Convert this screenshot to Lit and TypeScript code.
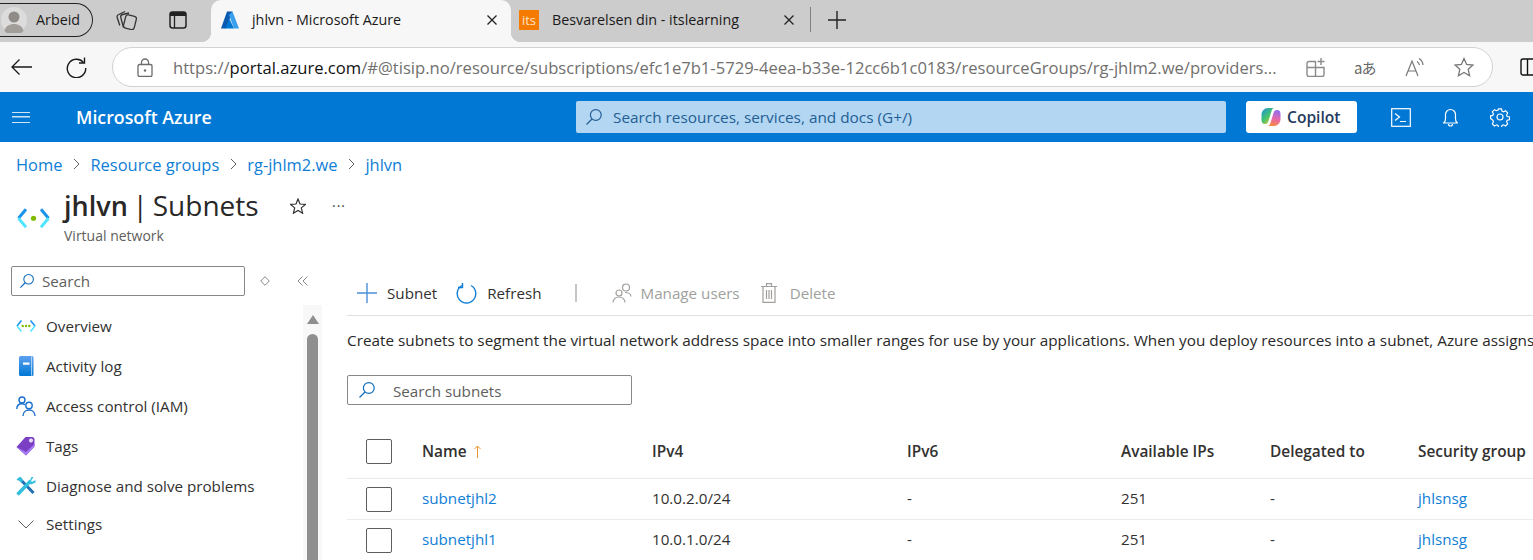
import { LitElement, css, html, svg } from 'lit';
import { customElement } from 'lit/decorators.js';

const icon = (w: number, h: number, body: unknown, vb = `0 0 ${w} ${h}`) =>
  html`<svg width=${w} height=${h} viewBox=${vb} fill="none">${body}</svg>`;

const magnifier = (color: string, size = 18) =>
  icon(size, size, svg`<circle cx="10.8" cy="7" r="5.4" stroke=${color} stroke-width="1.2"/><path d="M7 11 1.5 16.5" stroke=${color} stroke-width="1.3"/>`, '0 0 18 18');

const closeIcon = () => icon(10, 10, svg`<path d="M.5.5l9 9m0-9-9 9" stroke="#222" stroke-width="1.3"/>`);

const vnetIcon = (size: number) =>
  icon(size, size * 0.62, svg`
    <path d="M9 1 1.5 10" stroke="#1b93eb" stroke-width="3"/>
    <path d="M1.5 10 9 19" stroke="#50e6ff" stroke-width="3"/>
    <path d="M24 1 31.5 10" stroke="#1b93eb" stroke-width="3"/>
    <path d="M31.5 10 24 19" stroke="#50e6ff" stroke-width="3"/>
    <circle cx="16.5" cy="10" r="2.6" fill="#7fba00"/>`, '0 0 33 20');

const navItems = [
  {
    label: 'Overview',
    glyph: html`<svg width="20" height="12" viewBox="0 0 33 20" fill="none">
      <path d="M9 1 1.5 10" stroke="#1b93eb" stroke-width="2.6"/><path d="M1.5 10 9 19" stroke="#50e6ff" stroke-width="2.6"/>
      <path d="M24 1 31.5 10" stroke="#1b93eb" stroke-width="2.6"/><path d="M31.5 10 24 19" stroke="#50e6ff" stroke-width="2.6"/>
      <circle cx="11" cy="10" r="2" fill="#7fba00"/><circle cx="16.5" cy="10" r="2" fill="#7fba00"/><circle cx="22" cy="10" r="2" fill="#7fba00"/></svg>`,
  },
  {
    label: 'Activity log',
    glyph: icon(16, 20, svg`
      <defs><linearGradient id="book" x1="0" y1="0" x2="0" y2="1"><stop offset="0" stop-color="#5ea0ef"/><stop offset="1" stop-color="#0078d4"/></linearGradient></defs>
      <path d="M2.5 0H14a1.5 1.5 0 0 1 1.5 1.5v17A1.5 1.5 0 0 1 14 20H2.5A1.5 1.5 0 0 1 1 18.5v-17A1.5 1.5 0 0 1 2.5 0Z" fill="url(#book)"/>
      <path d="M13.6.3v19.4" stroke="#d4e6f7" stroke-width=".8"/>
      <rect x="5" y="6.5" width="6.5" height="2.2" fill="#fff"/>`),
  },
  {
    label: 'Access control (IAM)',
    glyph: icon(20, 20, svg`
      <g stroke="#1a70cf" stroke-width="1.4">
        <circle cx="6" cy="4" r="3"/><path d="M.8 13c0-3 2-5.2 5.2-5.2 1.2 0 2.2.3 3 .9"/>
        <circle cx="13" cy="9.5" r="3.2"/><path d="M7 20c0-3.5 2.5-6 6-6s6 2.5 6 6"/>
      </g>`),
  },
  {
    label: 'Tags',
    glyph: icon(20, 20, svg`
      <path d="M9.5 1H16a2.5 2.5 0 0 1 2.5 2.5v7L10 19.5.5 11Z" fill="#7b3fc4"/>
      <path d="M.5 11 10 19.5l8.5-9V8L10 16Z" fill="#a67af4"/>
      <circle cx="15" cy="4.5" r="1.7" fill="#e5d5f7" stroke="#fff" stroke-width=".6"/>`),
  },
  {
    label: 'Diagnose and solve problems',
    glyph: icon(20, 20, svg`
      <path d="M3 2 17.5 17" stroke="#1f6fb5" stroke-width="3"/>
      <path d="M1.5 18.5 14.5 5" stroke="#32bedd" stroke-width="3.4"/>
      <path d="M13 6.5 15.5 1h2L15 5l1 1 3.5-2v2.5L15 8.5Z" fill="#32bedd"/>
      <path d="M5.5 1.5a4 4 0 0 0-5 2.5l3 .7.8 1.8 2.8-1.5Z" fill="#32bedd"/>`),
  },
];

const columns = ['Name', 'IPv4', 'IPv6', 'Available IPs', 'Delegated to', 'Security group'];
const subnets = [
  { name: 'subnetjhl2', ipv4: '10.0.2.0/24', ipv6: '-', free: '251', delegated: '-', nsg: 'jhlsnsg' },
  { name: 'subnetjhl1', ipv4: '10.0.1.0/24', ipv6: '-', free: '251', delegated: '-', nsg: 'jhlsnsg' },
];

@customElement('app-root')
export class AppRoot extends LitElement {
  static styles = css`
    :host {
      display: block;
      width: 1533px;
      height: 560px;
      overflow: hidden;
      background: #fff;
      color: #323130;
      font-family: 'Open Sans', 'Noto Sans', sans-serif;
      font-size: 15.2px;
    }

    svg {
      display: block;
      flex: none;
    }

    /* browser chrome */
    .strip {
      display: flex;
      align-items: center;
      height: 42px;
      background: #ccc;
      color: #1a1a1a;
      font-size: 14.3px;
    }

    .profile {
      display: flex;
      align-items: center;
      box-sizing: border-box;
      width: 93px;
      height: 34px;
      margin-top: -3px;
      border: 1.5px solid #222;
      border-left: 0;
      border-radius: 0 17px 17px 0;
    }

    .avatar {
      width: 26px;
      height: 26px;
      margin: 0 9px 0 1px;
      flex: none;
    }

    .strip-btn {
      display: flex;
      margin-left: 23px;
      margin-top: -3px;
    }

    .strip-btn.second {
      margin-left: 32px;
    }

    .tab {
      position: relative;
      display: flex;
      align-items: center;
      box-sizing: border-box;
      width: 300px;
      height: 42px;
      margin-left: 24px;
      padding: 0 14px 3px 10px;
    }

    .tab.active {
      background: #f7f7f7;
      border-radius: 10px 10px 0 0;
    }

    .tab.active::before,
    .tab.active::after {
      content: '';
      position: absolute;
      bottom: 0;
      width: 10px;
      height: 10px;
    }

    .tab.active::before {
      left: -10px;
      background: radial-gradient(circle at 0 0, #ccc 10px, #f7f7f7 10.5px);
    }

    .tab.active::after {
      right: -10px;
      background: radial-gradient(circle at 100% 0, #ccc 10px, #f7f7f7 10.5px);
    }

    .tab.other {
      width: 299px;
      margin-left: 0;
      padding-left: 8px;
      padding-right: 16px;
    }

    .tab-title {
      flex: 1;
      margin-left: 13px;
      white-space: nowrap;
    }

    .its {
      display: flex;
      align-items: center;
      justify-content: center;
      width: 20px;
      height: 20px;
      background: #f47b00;
      color: #ffe3c7;
      font-size: 13px;
    }

    .tab-sep {
      width: 1px;
      height: 25px;
      margin: -3px 17px 0 0;
      background: #808080;
    }

    .new-tab {
      margin-top: -3px;
    }

    .toolbar {
      display: flex;
      align-items: center;
      height: 50px;
      background: #f7f7f7;
    }

    .nav-btn {
      display: flex;
      justify-content: center;
      width: 28px;
    }

    .nav-btn.back {
      margin-left: 7px;
    }

    .nav-btn.reload {
      margin-left: 27px;
    }

    .address {
      display: flex;
      align-items: center;
      box-sizing: border-box;
      width: 1381px;
      height: 40px;
      margin-left: 22px;
      padding: 0 18px 0 24px;
      background: #fff;
      border: 1.5px solid #d2d2d2;
      border-radius: 20px;
    }

    .url {
      flex: 1;
      margin-left: 20px;
      color: #71706e;
      font-size: 16.6px;
      white-space: nowrap;
    }

    .url b {
      color: #111;
      font-weight: 400;
    }

    .addr-icons {
      display: flex;
      align-items: center;
      gap: 29px;
    }

    .translate {
      width: 22px;
      color: #666;
      font-family: 'Noto Sans CJK JP', sans-serif;
      font-size: 15px;
      white-space: nowrap;
      letter-spacing: -1px;
    }

    .sidebar-btn {
      margin-left: 27px;
    }

    /* portal header */
    .portal {
      display: flex;
      align-items: center;
      height: 50px;
      background: #0078d4;
      color: #fff;
    }

    .burger {
      width: 18px;
      height: 11px;
      margin-left: 12px;
      border-top: 1.5px solid #cfe4f5;
      border-bottom: 1.5px solid #cfe4f5;
      background: linear-gradient(#cfe4f5, #cfe4f5) center / 100% 1.5px no-repeat;
      box-sizing: border-box;
    }

    .brand {
      width: 500px;
      margin-left: 46px;
      font-size: 17.8px;
      font-weight: 600;
    }

    .portal-search {
      display: flex;
      align-items: center;
      gap: 10px;
      box-sizing: border-box;
      width: 650px;
      height: 32px;
      padding-left: 9px;
      background: #b3d6f2;
      border-radius: 2px;
      color: #235e94;
      font-size: 15.35px;
    }

    .copilot {
      display: flex;
      align-items: center;
      gap: 6px;
      box-sizing: border-box;
      width: 111px;
      height: 32px;
      margin-left: 20px;
      padding-left: 15px;
      background: #fff;
      border-radius: 3px;
      color: #243a5e;
      font-size: 15.6px;
      font-weight: 600;
    }

    .portal-icons {
      display: flex;
      align-items: center;
      margin-left: 34px;
      gap: 32px;
    }

    /* page heading */
    .crumbs {
      display: flex;
      align-items: center;
      box-sizing: border-box;
      height: 46px;
      padding: 0 0 2px 16px;
      color: #0f7ed6;
      font-size: 16.45px;
    }

    .crumbs svg {
      margin: 0 10.5px;
    }

    .heading {
      display: flex;
      align-items: flex-start;
      height: 78px;
      padding-left: 17px;
    }

    .heading .vnet {
      margin-top: 20px;
    }

    .heading-text {
      margin-left: 14px;
      width: 218px;
    }

    h1 {
      margin: 0;
      color: #292827;
      font-size: 28px;
      font-weight: 400;
      line-height: 35px;
      word-spacing: -2.5px;
      white-space: nowrap;
    }

    h1 b {
      font-size: 27px;
      font-weight: 600;
    }

    .subtitle {
      margin-top: 4px;
      color: #605e5c;
      font-size: 14px;
      line-height: 18px;
    }

    .heading .star {
      margin: 10px 0 0 8px;
    }

    .more {
      margin: 8px 0 0 26px;
      color: #444;
      font-size: 14px;
      letter-spacing: 1px;
    }

    .layout {
      display: flex;
    }

    /* left menu */
    .side {
      display: flex;
      flex: none;
      width: 347px;
    }

    .side-main {
      width: 303px;
      padding-left: 11px;
      box-sizing: border-box;
    }

    .side-search-row {
      display: flex;
      align-items: center;
      height: 30px;
      margin-bottom: 10px;
    }

    .box {
      display: flex;
      flex: none;
      align-items: center;
      box-sizing: border-box;
      background: #fff;
      border: 1px solid #8a8886;
      border-radius: 2px;
      color: #605e5c;
    }

    .side-search {
      gap: 7px;
      width: 234px;
      height: 30px;
      padding-left: 7px;
    }

    .side-tools {
      display: flex;
      flex: none;
      align-items: center;
      margin-left: 15px;
      gap: 27px;
    }

    .nav {
      display: flex;
      flex-direction: column;
    }

    .nav-item {
      display: flex;
      align-items: center;
      height: 40px;
    }

    .nav-item.settings {
      height: 36px;
    }

    .nav-glyph {
      display: flex;
      justify-content: center;
      width: 30px;
      margin-right: 5px;
    }

    .scroll {
      display: flex;
      flex-direction: column;
      align-items: center;
      box-sizing: border-box;
      width: 19px;
      height: 260px;
      margin-top: 39px;
      padding-top: 10px;
      background: #f8f8f8;
    }

    .scroll-up {
      width: 0;
      height: 0;
      border-left: 6.5px solid transparent;
      border-right: 6.5px solid transparent;
      border-bottom: 9px solid #8f8f8f;
    }

    .scroll-thumb {
      flex: 1;
      width: 11px;
      margin-top: 10px;
      background: #8f8f8f;
      border-radius: 6px 6px 0 0;
    }

    /* subnets blade */
    .blade {
      flex: 1;
      min-width: 0;
      padding-top: 11px;
    }

    .commands {
      display: flex;
      align-items: center;
      height: 32px;
      padding-bottom: 6px;
      border-bottom: 1px solid #e1dfdd;
    }

    .cmd {
      display: flex;
      align-items: center;
      gap: 10px;
      white-space: nowrap;
    }

    .cmd.add {
      margin-left: 10px;
    }

    .cmd.refresh {
      margin-left: 19px;
    }

    .cmd.users {
      margin-left: 35px;
      gap: 9px;
    }

    .cmd.del {
      margin-left: 21px;
      gap: 13px;
    }

    .cmd.disabled {
      color: #a19f9d;
    }

    .cmd-sep {
      width: 2px;
      height: 18px;
      margin-left: 33px;
      background: #c8c6c4;
    }

    .desc {
      height: 20px;
      margin: 14px 0 25px;
      color: #292827;
      font-size: 15.3px;
      line-height: 20px;
      white-space: nowrap;
    }

    .blade-search {
      gap: 17px;
      width: 285px;
      height: 30px;
      padding-left: 10px;
    }

    .blade-search span {
      margin-top: 2px;
    }

    .table {
      margin-top: 20px;
    }

    .row {
      display: grid;
      grid-template-columns: 75px 230px 255px 214px 149px 148px 1fr;
      align-items: center;
      height: 41px;
      border-top: 1px solid #edebe9;
      box-sizing: border-box;
      white-space: nowrap;
    }

    .row > :not(.check) {
      margin-bottom: 2px;
    }

    .row.head {
      height: 53px;
      border-top: 0;
      font-size: 15.4px;
      font-weight: 600;
    }

    .row.head > :not(.check) {
      margin-bottom: 0;
    }

    .check {
      box-sizing: border-box;
      width: 26px;
      height: 25px;
      margin-left: 19px;
      background: #fff;
      border: 1px solid #605e5c;
      border-radius: 2px;
    }

    .name-cell {
      display: flex;
      align-items: center;
      gap: 7px;
    }

    a {
      color: #0f7ed6;
      text-decoration: none;
    }
  `;

  private renderStrip() {
    return html`<div class="strip">
      <div class="profile">
        <svg class="avatar" viewBox="0 0 26 26">
          <circle cx="13" cy="13" r="13" fill="#dcdcdc" />
          <circle cx="13" cy="10" r="5.5" fill="#8f8b87" />
          <path d="M3.5 24c1-5 5-7 9.5-7s8.5 2 9.5 7a13 13 0 0 1-19 0Z" fill="#a19d99" />
        </svg>
        Arbeid
      </div>
      <span class="strip-btn">${icon(21, 20, svg`
        <g stroke="#333" stroke-width="1.3">
          <rect x="8.5" y="5.5" width="11" height="13.5" rx="2.5" transform="rotate(14 14 12)" />
          <path d="M7.5 17.5 4.8 7.5a2.5 2.5 0 0 1 1.8-3L13 3" />
          <path d="M3.8 15.5 1.2 7.5a2.5 2.5 0 0 1 1.6-3L9 1.5" />
        </g>`)}</span>
      <span class="strip-btn second">${icon(18, 18, svg`
        <rect x="1" y="1" width="16" height="16" rx="2.5" stroke="#222" stroke-width="1.5" />
        <path d="M1 2.5A1.5 1.5 0 0 1 2.5 1h13A1.5 1.5 0 0 1 17 2.5V5H1Z" fill="#222" />
        <path d="M5.5 5v12" stroke="#222" stroke-width="1.3" />`)}</span>
      <div class="tab active">
        ${icon(18, 18, svg`
          <path d="M6 .5h5.500L5 17.500H0Z" fill="#0a5bb0" />
          <path d="M11.500.5 18 17.500h-5L8 4Z" fill="#3aa0ee" />
          <path d="M8.500 8 13 17.500H4Z" fill="#0078d4" />`)}
        <span class="tab-title">jhlvn - Microsoft Azure</span>
        ${closeIcon()}
      </div>
      <div class="tab other">
        <span class="its">its</span>
        <span class="tab-title">Besvarelsen din - itslearning</span>
        ${closeIcon()}
      </div>
      <span class="tab-sep"></span>
      <span class="new-tab">${icon(18, 18, svg`<path d="M9 0v18M0 9h18" stroke="#222" stroke-width="1.4" />`)}</span>
    </div>`;
  }

  private renderToolbar() {
    return html`<div class="toolbar">
      <span class="nav-btn back">${icon(21, 16, svg`<path d="M8.500.5 1 8l7.500 7.500M1 8h20" stroke="#1a1a1a" stroke-width="1.3" />`)}</span>
      <span class="nav-btn reload">${icon(21, 21, svg`
        <path d="M17.500 5.500A9.200 9.200 0 1 0 19.700 11" stroke="#1a1a1a" stroke-width="1.4" />
        <path d="M18.500.5V6H13" stroke="#1a1a1a" stroke-width="1.4" />`)}</span>
      <div class="address">
        ${icon(16, 19, svg`
          <rect x="1" y="6.5" width="14" height="12" rx="1.5" stroke="#6b6b6b" stroke-width="1.3" />
          <path d="M4.500 6.500v-2a3.500 3.500 0 0 1 7 0v2" stroke="#6b6b6b" stroke-width="1.3" />
          <circle cx="8" cy="12.5" r="1.2" fill="#6b6b6b" />`)}
        <span class="url">https://<b>portal.azure.com</b>/#@tisip.no/resource/subscriptions/efc1e7b1-5729-4eea-b33e-12cc6b1c0183/resourceGroups/rg-jhlm2.we/providers...</span>
        <span class="addr-icons">
          ${icon(19, 19, svg`
            <g stroke="#8a8a8a" stroke-width="1.4">
              <path d="M10 3.500H3a2 2 0 0 0-2 2v11a2 2 0 0 0 2 2h13a2 2 0 0 0 2-2v-7H1" />
              <path d="M9.500 3.500v15M15 0v7M11.500 3.500h7" />
            </g>`)}
          <span class="translate">aあ</span>
          ${icon(20, 20, svg`
            <g stroke="#777" stroke-width="1.2">
              <path d="M1 19 7 4l6 15M3.200 14h7.600" />
              <path d="M12 4.500a5 5 0 0 1 2.500 3.500M14 1.500a8 8 0 0 1 4 6.500" />
            </g>`)}
          ${icon(20, 20, svg`<path d="M10 1.500 12.600 7.400 19 8l-4.800 4.300L15.600 18.700 10 15.400 4.400 18.700 5.800 12.300 1 8l6.400-.6Z" stroke="#777" stroke-width="1.3" />`)}
        </span>
      </div>
      <span class="sidebar-btn">${icon(13, 20, svg`
        <rect x="1" y="2" width="18" height="16" rx="2" stroke="#111" stroke-width="1.4" />
        <path d="M7.500 2v16" stroke="#111" stroke-width="1.4" />`)}</span>
    </div>`;
  }

  private renderPortal() {
    return html`<div class="portal">
      <span class="burger"></span>
      <span class="brand">Microsoft Azure</span>
      <div class="portal-search">${magnifier('#235e94')}<span>Search resources, services, and docs (G+/)</span></div>
      <div class="copilot">
        ${icon(20, 20, svg`
          <defs>
            <linearGradient id="cpa" x1="0" y1="0" x2=".8" y2="1"><stop offset="0" stop-color="#1b8fe0" /><stop offset=".55" stop-color="#45c46e" /><stop offset="1" stop-color="#f2c230" /></linearGradient>
            <linearGradient id="cpb" x1=".6" y1="0" x2=".4" y2="1"><stop offset="0" stop-color="#8f6cf0" /><stop offset=".55" stop-color="#e868a8" /><stop offset="1" stop-color="#f58a3c" /></linearGradient>
          </defs>
          <path d="M7 1h6.500c-1.500 0-2.300 1-2.800 2.500L7.500 14c-.6 2-1.500 3-3.500 3-2.500 0-3.500-1.500-3.500-4V8c0-4 3-7 6.500-7Z" fill="url(#cpa)" />
          <path d="M13 19H6.500c1.500 0 2.300-1 2.800-2.500L12.500 6c.6-2 1.500-3 3.500-3 2.500 0 3.500 1.500 3.500 4v5c0 4-3 7-6.500 7Z" fill="url(#cpb)" />`)}
        Copilot
      </div>
      <div class="portal-icons">
        ${icon(20, 19, svg`
          <rect x=".7" y=".7" width="18.6" height="17.6" stroke="#fff" stroke-width="1.2" />
          <path d="M4 5.500 8.500 9 4 12.500M9 13.500h6" stroke="#fff" stroke-width="1.2" />`)}
        ${icon(15, 19, svg`
          <path d="M.5 15c1.500-1 2-2 2-4V6.500a5 5 0 0 1 10 0V11c0 2 .5 3 2 4Z" stroke="#fff" stroke-width="1.2" />
          <path d="M5.500 16a2 2 0 0 0 4 0" stroke="#fff" stroke-width="1.2" />`)}
        ${icon(20, 20, svg`
          <circle cx="10" cy="10" r="3" stroke="#fff" stroke-width="1.2" />
          <path d="M8.300 1h3.400l.5 2.500 1.700.8 2.300-1.200 2.300 2.400-1.200 2.200.7 1.800 2.500.5v3l-2.500.6-.7 1.700 1.200 2.300-2.300 2.300-2.300-1.200-1.700.7-.5 2.300H8.300l-.5-2.300-1.700-.7-2.300 1.200-2.300-2.300 1.200-2.300-.7-1.700L-.5 11.700v-3L2 8.200l.7-1.800L1.500 4.200l2.300-2.400 2.300 1.200 1.700-.8Z" transform="translate(1 1) scale(.9)" stroke="#fff" stroke-width="1.3" />`)}
      </div>
    </div>`;
  }

  private renderHeading() {
    const chevron = icon(7, 12, svg`<path d="M1 1l5 5-5 5" stroke="#605e5c" stroke-width="1" />`);
    return html`<div class="crumbs">
        <span>Home</span>${chevron}<span>Resource groups</span>${chevron}<span>rg-jhlm2.we</span>${chevron}<span>jhlvn</span>
      </div>
      <div class="heading">
        <span class="vnet">${vnetIcon(33)}</span>
        <div class="heading-text">
          <h1><b>jhlvn</b> | Subnets</h1>
          <div class="subtitle">Virtual network</div>
        </div>
        <span class="star">${icon(16, 16, svg`<path d="M8 1 10 6l5.500.4-4.200 3.500 1.300 5.300L8 12.400l-4.600 2.800 1.300-5.300L.5 6.400 6 6Z" stroke="#323130" stroke-width="1.2" />`)}</span>
        <span class="more">···</span>
      </div>`;
  }

  private renderSide() {
    return html`<div class="side">
      <div class="side-main">
        <div class="side-search-row">
          <div class="box side-search">${magnifier('#0f6cbd', 16)}<span>Search</span></div>
          <div class="side-tools">
            ${icon(10, 10, svg`<path d="M5 .7 9.300 5 5 9.300.7 5Z" stroke="#8a8886" stroke-width="1" />`)}
            ${icon(11, 10, svg`<path d="M5.500.5 1 5l4.500 4.500M10.500.5 6 5l4.500 4.500" stroke="#8a8886" stroke-width="1" />`)}
          </div>
        </div>
        <div class="nav">
          ${navItems.map(
            (item) => html`<div class="nav-item"><span class="nav-glyph">${item.glyph}</span>${item.label}</div>`,
          )}
          <div class="nav-item settings">
            <span class="nav-glyph">${icon(16, 9, svg`<path d="M.5.5 8 8 15.500.5" stroke="#605e5c" stroke-width="1" />`)}</span>Settings
          </div>
        </div>
      </div>
      <div class="scroll"><span class="scroll-up"></span><span class="scroll-thumb"></span></div>
    </div>`;
  }

  private renderBlade() {
    return html`<div class="blade">
      <div class="commands">
        <span class="cmd add">
          ${icon(20, 20, svg`<path d="M10 0v20M0 10h20" stroke="#4a90d9" stroke-width="1.4" />`)}Subnet
        </span>
        <span class="cmd refresh">
          ${icon(21, 21, svg`
            <path d="M6 2.500a9.300 9.300 0 1 0 9 0" stroke="#0f7ed6" stroke-width="1.4" />
            <path d="M6.500 0v5H2" stroke="#0f7ed6" stroke-width="1.4" transform="translate(0 -.5)" />`)}Refresh
        </span>
        <span class="cmd-sep"></span>
        <span class="cmd disabled users">
          ${icon(20, 20, svg`
            <g stroke="#a19f9d" stroke-width="1.2">
              <circle cx="14" cy="4.500" r="3.500" /><circle cx="7" cy="10" r="3" />
              <path d="M1 19.500c0-3 2.500-5.500 6-5.500s6 2.500 6 5.500M13 9.500c3 0 6 1.500 6 4" />
            </g>`)}Manage users
        </span>
        <span class="cmd disabled del">
          ${icon(16, 20, svg`
            <g stroke="#a19f9d" stroke-width="1.2">
              <path d="M0 3.500h16M5.500 3.500V.7h5v2.800M2 3.500v15.800h12V3.500M5.500 7v9M8 7v9M10.500 7v9" />
            </g>`)}Delete
        </span>
      </div>
      <div class="desc">Create subnets to segment the virtual network address space into smaller ranges for use by your applications. When you deploy resources into a subnet, Azure assigns</div>
      <div class="box blade-search">${magnifier('#0f6cbd', 18)}<span>Search subnets</span></div>
      <div class="table">
        <div class="row head">
          <span class="check"></span>
          ${columns.map(
            (col) => html`<span class="name-cell">${col}${col === 'Name'
              ? icon(7, 13, svg`<path d="M3.500 13V1M.5 4l3-3 3 3" stroke="#e8952f" stroke-width="1" />`)
              : ''}</span>`,
          )}
        </div>
        ${subnets.map(
          (s) => html`<div class="row">
            <span class="check"></span>
            <a>${s.name}</a>
            <span>${s.ipv4}</span>
            <span>${s.ipv6}</span>
            <span>${s.free}</span>
            <span>${s.delegated}</span>
            <a>${s.nsg}</a>
          </div>`,
        )}
      </div>
    </div>`;
  }

  render() {
    return html`
      ${this.renderStrip()} ${this.renderToolbar()} ${this.renderPortal()} ${this.renderHeading()}
      <div class="layout">${this.renderSide()} ${this.renderBlade()}</div>
    `;
  }
}
